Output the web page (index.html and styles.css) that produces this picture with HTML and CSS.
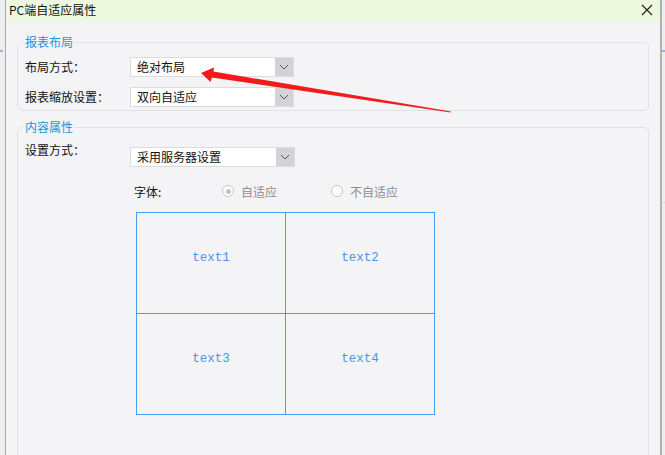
FILE: index.html
```html
<!DOCTYPE html>
<html lang="zh-CN">
<head>
    <meta charset="UTF-8">
    <meta name="viewport" content="width=device-width, initial-scale=1.0">
    <title>PC端自适应属性</title>
    <link rel="stylesheet" href="styles.css">
</head>
<body>
    <div class="desk">
        <div class="side side-left"><span class="mark"></span></div>

        <div class="dialog">
            <div class="titlebar">
                <span class="title">PC端自适应属性</span>
                <svg class="close" width="12" height="12" viewBox="0 0 12 12">
                    <path d="M1 1 L11 11 M11 1 L1 11" stroke="#222" stroke-width="1.2" fill="none"/>
                </svg>
            </div>

            <fieldset class="group group-layout">
                <legend>报表布局</legend>
                <div class="row">
                    <label>布局方式：</label>
                    <div class="select">
                        <span class="value">绝对布局</span>
                        <span class="arrow"><svg width="10" height="6" viewBox="0 0 10 6"><path d="M1 1 L5 5 L9 1" stroke="#555" stroke-width="1" fill="none"/></svg></span>
                    </div>
                </div>
                <div class="row">
                    <label>报表缩放设置：</label>
                    <div class="select">
                        <span class="value">双向自适应</span>
                        <span class="arrow"><svg width="10" height="6" viewBox="0 0 10 6"><path d="M1 1 L5 5 L9 1" stroke="#555" stroke-width="1" fill="none"/></svg></span>
                    </div>
                </div>
            </fieldset>

            <fieldset class="group group-content">
                <legend>内容属性</legend>
                <div class="row row-top">
                    <label>设置方式：</label>
                    <div class="select select-wide">
                        <span class="value">采用服务器设置</span>
                        <span class="arrow"><svg width="10" height="6" viewBox="0 0 10 6"><path d="M1 1 L5 5 L9 1" stroke="#555" stroke-width="1" fill="none"/></svg></span>
                    </div>
                </div>

                <div class="font-row">
                    <span class="font-label">字体:</span>
                    <span class="radio checked"><i></i>自适应</span>
                    <span class="radio"><i></i>不自适应</span>
                </div>

                <div class="preview">
                    <div class="cell">text1</div>
                    <div class="cell">text2</div>
                    <div class="cell">text3</div>
                    <div class="cell">text4</div>
                </div>
            </fieldset>
        </div>

        <div class="side side-right"><span class="mark"></span><span class="rule"></span></div>
    </div>

    <!-- flèche rouge d'annotation -->
    <svg class="annot" width="665" height="455" viewBox="0 0 665 455">
        <polygon points="201,73 214,67.5 213.5,71.5 451,111.5 450.5,112.5 212,77.5 210.5,82" fill="#f01c1c"/>
    </svg>
</body>
</html>
```

FILE: styles.css
```css
* {
    box-sizing: border-box;
}

body {
    margin: 0;
    padding: 0;
    width: 665px;
    height: 455px;
    overflow: hidden;
    font-family: "Noto Sans CJK SC", "Noto Sans", sans-serif;
    font-size: 12px;
    color: #111;
    background-color: #ededed;
}

.desk {
    display: flex;
    height: 455px;
}

.side {
    position: relative;
    background-color: #eeeeee;
}

.side-left {
    width: 6px;
    border-right: 1px solid #a9a9a9;
}

.side-right {
    width: 5px;
    border-left: 2px solid #b0b0b0;
}

.side .mark {
    position: absolute;
    top: 50px;
    left: 0;
    right: 0;
    height: 2px;
    background-color: #8db8e6;
}

.side-left .mark {
    right: 2px;
}

.side .rule {
    position: absolute;
    top: 202px;
    left: 0;
    right: 0;
    height: 1px;
    background-color: #d6d6d6;
}

.dialog {
    width: 654px;
    background-color: #f4f4f6;
    display: flex;
    flex-direction: column;
}

.titlebar {
    height: 21px;
    background-color: #eef8df;
    display: flex;
    align-items: center;
    justify-content: space-between;
    padding: 0 7px 1px 3px;
}

.title {
    font-size: 12px;
    line-height: 16px;
}

.close {
    display: block;
}

.group {
    margin: 13px 11px 0 11px;
    padding: 0 7px;
    border: 1px solid #e1e1e5;
    border-radius: 5px;
}

.group legend {
    padding: 0 2px;
    margin-left: -2px;
    color: #1a97d9;
    font-size: 12px;
    line-height: 16px;
}

.group-layout {
    padding-bottom: 3px;
}

.group-content {
    margin-top: 8px;
    flex: 1;
    border-bottom: none;
    border-bottom-left-radius: 0;
    border-bottom-right-radius: 0;
}

.row {
    display: flex;
    align-items: center;
    margin-top: 7px;
}

.row + .row {
    margin-top: 10px;
}

.row label {
    width: 105px;
    line-height: 16px;
}

.row-top {
    margin-top: 7px;
    align-items: flex-start;
}

.row-top .select {
    margin-top: 5px;
}

.select {
    width: 164px;
    height: 20px;
    display: flex;
    background-color: #fff;
    border: 1px solid #dcdcdc;
}

.select-wide {
    width: 165px;
}

.select .value {
    flex: 1;
    padding-left: 6px;
    line-height: 18px;
}

.select .arrow {
    width: 18px;
    background-color: #d3d3d7;
    display: flex;
    align-items: center;
    justify-content: center;
}

.font-row {
    display: flex;
    align-items: center;
    margin: 15px 0 0 109px;
    height: 18px;
}

.font-label {
    width: 88px;
}

.radio {
    display: flex;
    align-items: center;
    color: #8e8e8e;
    width: 109px;
}

.radio i {
    width: 12px;
    height: 12px;
    border: 1px solid #c6c6c6;
    border-radius: 50%;
    background-color: #fff;
    margin-right: 7px;
    position: relative;
}

.radio.checked i::after {
    content: "";
    position: absolute;
    left: 2.5px;
    top: 2.5px;
    width: 5px;
    height: 5px;
    border-radius: 50%;
    background-color: #c4c4c4;
}

.preview {
    margin: 12px 0 0 111px;
    width: 299px;
    height: 203px;
    display: grid;
    grid-template-columns: 149px 148px;
    grid-template-rows: 101px 100px;
    border: 1px solid #4a9cf2;
}

.cell {
    display: flex;
    align-items: center;
    justify-content: center;
    padding-bottom: 11px;
    font-family: "Liberation Mono", "DejaVu Sans Mono", monospace;
    font-size: 12.5px;
    color: #4a94ea;
}

.cell:nth-child(odd) {
    border-right: 1px solid #4a9cf2;
}

.cell:nth-child(-n+2) {
    border-bottom: 1px solid #4a9cf2;
}

.annot {
    position: absolute;
    left: 0;
    top: 0;
    pointer-events: none;
}
```
